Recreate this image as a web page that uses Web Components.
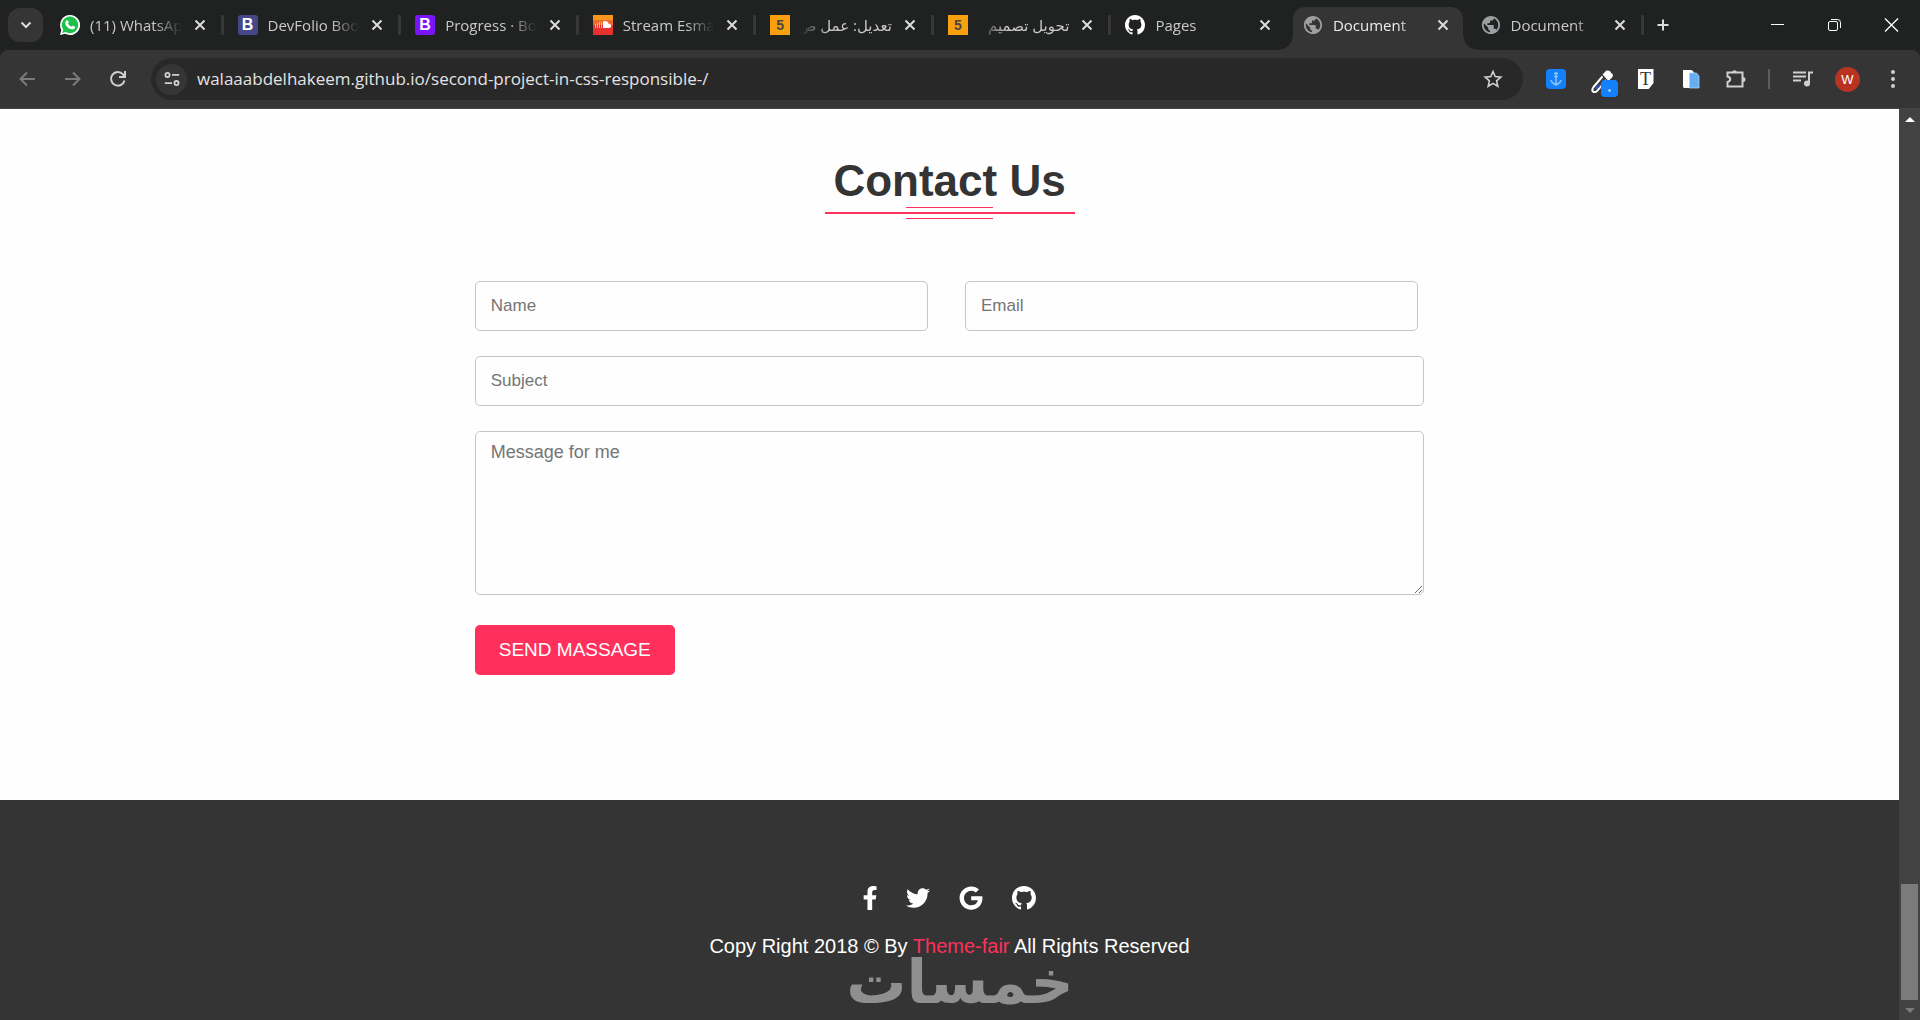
<!DOCTYPE html>
<html lang="en">
<head>
<meta charset="UTF-8">
<meta name="viewport" content="width=device-width, initial-scale=1.0">
<title>Document</title>
<style>
    :root {
        --main_color: #ff305b;
        --dark_color: #343434;
        --strip_color: #202221;
        --toolbar_color: #353535;
        --ui_font: "Open Sans", "Noto Sans", "DejaVu Sans", sans-serif;
        --page_font: "Liberation Sans", Arial, sans-serif;
    }
    body {
        margin: 0;
        min-height: 100vh;
        display: flex;
        flex-direction: column;
        font-family: var(--page_font);
    }
    .view {
        flex: 1;
        display: flex;
    }
    main {
        flex: 1;
        display: flex;
        flex-direction: column;
        background-color: #fefefe;
    }
    page-footer {
        flex: 1;
    }
</style>
</head>
<body>
    <tab-strip>
        <browser-tab icon="whatsapp">(11) WhatsAp</browser-tab>
        <browser-tab letter="B" tint="#46478a">DevFolio Boo</browser-tab>
        <browser-tab letter="B" tint="#7a14fb">Progress · Boo</browser-tab>
        <browser-tab icon="soundcloud">Stream Esmae</browser-tab>
        <browser-tab letter="5" tint="#f9a00f" ink="#4a4540" square rtl>تعديل: عمل ص</browser-tab>
        <browser-tab letter="5" tint="#f9a00f" ink="#4a4540" square rtl>تحويل تصميم</browser-tab>
        <browser-tab icon="github" nosep>Pages</browser-tab>
        <browser-tab icon="globe" active nosep>Document</browser-tab>
        <browser-tab icon="globe">Document</browser-tab>
    </tab-strip>
    <browser-toolbar url="walaaabdelhakeem.github.io/second-project-in-css-responsible-/"></browser-toolbar>
    <div class="view">
        <main>
            <contact-section>
                <section-title slot="title">Contact Us</section-title>
            </contact-section>
            <page-footer>Copy Right 2018 © By <a href="#">Theme-fair</a> All Rights Reserved</page-footer>
        </main>
        <scroll-rail></scroll-rail>
    </div>
    <water-mark>خمسات</water-mark>

<script>
const line = 'fill="none" stroke="currentColor" stroke-width="2"'

const icons = {
    whatsapp: `<svg viewBox="0 0 20 20"><path fill="#fff" d="M10 0a10 10 0 1 1-4.700 18.800L0 20l1.400-5A10 10 0 0 1 10 0z"/><path fill="#1fc04a" d="M10 1.600a8.300 8.300 0 1 1-4.200 15.500L2.300 17.900l.9-3.400A8.300 8.300 0 0 1 10 1.600z"/><path fill="#fff" d="M7 5.300c.5-.3.900-.1 1.100.4l.7 1.600c.1.400-.7 1-.8 1.300.8 1.500 1.900 2.500 3.400 3.100.4 0 1-1.200 1.400-1l1.900.9c.5.300.3 1.100 0 1.600-.8 1.300-2.500 1.400-4.100.8-2.600-1-4.300-2.800-5.300-5.100-.5-1.500.6-3.100 1.700-3.600z"/></svg>`,
    soundcloud: `<svg viewBox="0 0 20 20"><path fill="#f7941d" d="M0 0h20v10H0z"/><path fill="#e8302e" d="M0 10h20v10H0z"/><path fill="#f06a2a" d="M0 5h20v5H0z"/><path fill="#f5b3a0" d="M2 9h1v4H2zM4 8h1v5H4zM6 7h1v6H6zM8 7h1v6H8z"/><path fill="#fff" d="M10 6.500c3-1.600 5.500.2 5.800 2.500 1.300-.2 2.400.8 2.400 2s-1 2-2.200 2h-6z"/></svg>`,
    github: `<svg viewBox="0 0 16 16"><path fill="#fff" d="M8 0C3.580 0 0 3.580 0 8c0 3.540 2.290 6.530 5.470 7.590.4.070.55-.17.55-.38 0-.19-.01-.82-.01-1.490-2.010.37-2.530-.49-2.690-.94-.09-.23-.48-.94-.82-1.130-.28-.15-.68-.52-.01-.53.63-.01 1.080.58 1.230.82.72 1.210 1.870.87 2.330.66.07-.52.28-.87.51-1.070-1.780-.2-3.640-.89-3.640-3.950 0-.87.31-1.590.82-2.150-.08-.2-.36-1.020.08-2.120 0 0 .67-.21 2.200.82.64-.18 1.320-.27 2-.27s1.360.09 2 .27c1.530-1.040 2.200-.82 2.200-.82.44 1.100.16 1.920.08 2.120.51.56.82 1.270.82 2.150 0 3.070-1.870 3.750-3.650 3.950.29.25.54.73.54 1.480 0 1.070-.01 1.930-.01 2.200 0 .21.15.46.55.38A8.010 8.010 0 0 0 16 8c0-4.420-3.580-8-8-8z"/></svg>`,
    globe: `<svg viewBox="1 1 22 22"><path fill="#9da0a3" d="M12 2C6.480 2 2 6.480 2 12s4.480 10 10 10 10-4.480 10-10S17.520 2 12 2zm-1 17.930c-3.950-.49-7-3.850-7-7.930 0-.62.08-1.210.21-1.790L9 15v1c0 1.100.9 2 2 2v1.930zm6.900-2.540c-.26-.81-1-1.390-1.900-1.390h-1v-3c0-.55-.45-1-1-1H8v-2h2c.55 0 1-.45 1-1V7h2c1.100 0 2-.9 2-2v-.41c2.930 1.190 5 4.060 5 7.410 0 2.080-.8 3.970-2.100 5.390z"/></svg>`,
    close: `<svg viewBox="0 0 20 20"><path ${line} d="M5.500 5.500l9 9M14.500 5.500l-9 9"/></svg>`,
    chevron: `<svg viewBox="0 0 20 20"><path ${line} d="M5.500 7.500l4.500 4.500 4.500-4.500"/></svg>`,
    plus: `<svg viewBox="0 0 20 20"><path ${line} d="M10 4.500v11M4.500 10h11"/></svg>`,
    minimize: `<svg viewBox="0 0 20 20"><path fill="none" stroke="currentColor" d="M3 9.500h13"/></svg>`,
    restore: `<svg viewBox="0 0 20 20"><g fill="none" stroke="currentColor"><rect x="3.500" y="6.500" width="9" height="9" rx="1.500"/><path d="M6 4.500h6.500q3 0 3 3V13"/></g></svg>`,
    quit: `<svg viewBox="0 0 20 20"><path fill="none" stroke="currentColor" stroke-width="1.300" d="M3 3.500l13 13M16 3.500l-13 13"/></svg>`,
    back: `<svg viewBox="0 0 20 20"><path ${line} d="M17 10H3M9 3.500L2.500 10 9 16.500"/></svg>`,
    forward: `<svg viewBox="0 0 20 20"><path ${line} d="M2 10h14M10 3.500l6.500 6.500-6.500 6.500"/></svg>`,
    reload: `<svg viewBox="0 0 20 20"><path ${line} d="M16.500 11.500A6.800 6.800 0 1 1 15 5.300l1.500 2"/><path ${line} d="M17 2v6h-6"/></svg>`,
    tune: `<svg viewBox="0 0 20 20"><g ${line}><circle cx="5" cy="5.500" r="2.300"/><circle cx="15" cy="14.500" r="2.300"/><path d="M10 5.500h8M2 14.500h8"/></g></svg>`,
    star: `<svg viewBox="0 0 20 20"><path fill="none" stroke="currentColor" stroke-width="1.600" d="M10 2.500l2.200 5.100 5.600.5-4.200 3.700 1.200 5.500L10 14.400l-4.800 2.900 1.200-5.500-4.200-3.700 5.600-.5z"/></svg>`,
    anchor: `<svg viewBox="0 0 20 20"><rect width="20" height="20" rx="4" fill="#1580fb"/><path fill="none" stroke="#8cc4f5" stroke-width="1.500" d="M10 3v13M8 4.500h4M8 7.500h4M5 11c.5 3 3 4 5 5 2-1 4.500-2 5-5"/></svg>`,
    dropper: `<svg viewBox="0 0 28 28"><path fill="#fff" d="M14 3c2-3 6-1 6 1 2 .5 3 3 .5 5l-3 3-6-6.500z"/><path fill="none" stroke="#fff" stroke-width="2" d="M11.500 7.500L2.500 18c-1.500 2-1.500 4-.5 4.500 1 1 3 .5 4-.5l9-11"/><path fill="#3450b0" d="M4 18.500l4-3 2 1-5 5z"/><rect x="10" y="11" width="17" height="17" rx="4" fill="#1580fb"/><path fill="#fff" d="M17.500 20.500h2v2h-2z"/></svg>`,
    paste: `<svg viewBox="0 0 20 20"><path fill="#fff" d="M2 1h7c3 0 4 2 4 4v14H4c-1.500 0-2-.5-2-2z"/><path fill="#67aef0" stroke="#a9d4fa" stroke-width=".8" d="M8.500 4h7l2.500 3v12H8.500z"/></svg>`,
    puzzle: `<svg viewBox="0 0 20 20"><path ${line} d="M1.500 3.500h15v14h-15v-4.500q2.700-.6 2.700-2.700t-2.700-2.700z"/><path fill="currentColor" d="M6 3a2.700 2.700 0 0 1 5 0zM17 8a2.500 2.500 0 0 1 0 5z"/></svg>`,
    queue: `<svg viewBox="0 0 20 20"><path ${line} d="M0 3.500h13M0 7.500h13M0 11.500h8M16 15V3.500h4"/><circle cx="14" cy="14.500" r="3" fill="currentColor"/></svg>`,
    dots: `<svg viewBox="0 0 20 20"><g fill="currentColor"><circle cx="10" cy="3" r="2"/><circle cx="10" cy="10" r="2"/><circle cx="10" cy="17" r="2"/></g></svg>`,
    facebook: `<svg viewBox="22 0 272 512"><path fill="#fff" d="M279.140 288l14.220-92.660h-88.910v-60.130c0-25.350 12.420-50.060 52.240-50.060h40.420V6.260S260.430 0 225.360 0c-73.220 0-121.080 44.380-121.080 124.720v70.620H22.890V288h81.390v224h100.170V288z"/></svg>`,
    twitter: `<svg viewBox="0 0 512 512"><path fill="#fff" d="M459.370 151.716c.325 4.548.325 9.097.325 13.645 0 138.720-105.583 298.558-298.558 298.558-59.452 0-114.680-17.219-161.137-47.106 8.447.974 16.568 1.299 25.340 1.299 49.055 0 94.213-16.568 130.274-44.832-46.132-.975-84.792-31.188-98.112-72.772 6.498.974 12.995 1.624 19.818 1.624 9.421 0 18.843-1.300 27.614-3.573-48.081-9.747-84.143-51.980-84.143-102.985v-1.299c13.969 7.797 30.214 12.670 47.431 13.319-28.264-18.843-46.781-51.005-46.781-87.391 0-19.492 5.197-37.360 14.294-52.954 51.655 63.675 129.300 105.258 216.365 109.807-1.624-7.797-2.599-15.918-2.599-24.040 0-57.828 46.782-104.934 104.934-104.934 30.213 0 57.502 12.670 76.670 33.137 23.715-4.548 46.456-13.320 66.599-25.340-7.798 24.366-24.366 44.833-46.132 57.827 21.117-2.273 41.584-8.122 60.426-16.243-14.292 20.791-32.161 39.308-52.628 54.253z"/></svg>`,
    google: `<svg viewBox="0 0 488 512"><path fill="#fff" d="M488 261.800C488 403.300 391.100 504 248 504 110.800 504 0 393.200 0 256S110.800 8 248 8c66.800 0 123 24.500 166.300 64.900l-67.500 64.900C258.500 52.600 94.300 116.600 94.300 256c0 86.500 69.100 156.600 153.700 156.600 98.200 0 135-70.400 140.800-106.900H248v-85.300h236.100c2.300 12.700 3.900 24.900 3.900 41.400z"/></svg>`
}

customElements.define("tab-strip", class TabStrip extends HTMLElement{
    constructor(){
        super()
        this.shadow = this.attachShadow({mode: "open"})
        this.shadow.innerHTML = `
            <style>
            :host {
                display: flex;
                height: 50px;
                background-color: var(--strip_color);
                color: #dcdcdc;
                padding-left: 8px;
                font-family: var(--ui_font);
            }
            button {
                background: none;
                border: none;
                padding: 0;
                color: inherit;
                display: flex;
                align-items: center;
                justify-content: center;
            }
            svg {
                width: 20px;
                height: 20px;
            }
            .search {
                align-self: center;
                flex: none;
                width: 35px;
                height: 34px;
                border-radius: 12px;
                background-color: var(--toolbar_color);
                margin-right: 3px;
            }
            .tabs {
                flex: 0 1 1598px;
                min-width: 0;
                display: flex;
            }
            .new {
                width: 38px;
            }
            .window {
                margin-left: auto;
                display: flex;
                color: #fff;
                button {
                    width: 57px;
                }
            }
            </style>
            <button class="search" aria-label="Search tabs">${icons.chevron}</button>
            <div class="tabs"><slot></slot></div>
            <button class="new" aria-label="New tab">${icons.plus}</button>
            <div class="window">
                <button aria-label="Minimize">${icons.minimize}</button>
                <button aria-label="Restore">${icons.restore}</button>
                <button aria-label="Close">${icons.quit}</button>
            </div>
        `
    }
})

customElements.define("browser-tab", class BrowserTab extends HTMLElement{
    constructor(){
        super()
        this.shadow = this.attachShadow({mode: "open"})
        const letter = this.getAttribute("letter")
        const favicon = letter
            ? `<span class="letter" style="background-color:${this.getAttribute("tint")};color:${this.getAttribute("ink") || "#fff"}">${letter}</span>`
            : icons[this.getAttribute("icon")]
        this.shadow.innerHTML = `
            <style>
            :host {
                flex: 1 1 0;
                min-width: 0;
                display: flex;
                align-items: center;
                position: relative;
                box-sizing: border-box;
                padding-left: 14px;
                font-size: 15px;
                color: #c8c8c8;
            }
            :host([active]) {
                color: #ececec;
                isolation: isolate;
            }
            /* tab shape with the two flared feet */
            :host([active])::before {
                content: "";
                position: absolute;
                z-index: -1;
                inset: 7px -10px 0 -10px;
                background:
                    radial-gradient(circle at 0 0, transparent 13px, var(--toolbar_color) 14px) left bottom / 14px 14px no-repeat,
                    radial-gradient(circle at 100% 0, transparent 13px, var(--toolbar_color) 14px) right bottom / 14px 14px no-repeat;
            }
            :host([active])::after {
                content: "";
                position: absolute;
                z-index: -1;
                inset: 7px 4px 0 4px;
                border-radius: 12px 12px 0 0;
                background-color: var(--toolbar_color);
            }
            svg, .letter {
                flex: none;
                width: 20px;
                height: 20px;
            }
            .letter {
                border-radius: 3px;
                font: bold 16px/20px var(--page_font);
                text-align: center;
            }
            :host([square]) .letter {
                border-radius: 0;
                font-size: 14px;
            }
            .title {
                flex: 1;
                min-width: 0;
                margin: 0 8px 0 10px;
                line-height: 24px;
                white-space: nowrap;
                overflow: hidden;
                mask-image: linear-gradient(to left, transparent, #000 28px);
            }
            :host([rtl]) .title {
                direction: rtl;
                mask-image: linear-gradient(to right, transparent, #000 28px);
            }
            button {
                flex: none;
                display: flex;
                background: none;
                border: none;
                padding: 0;
                color: #dcdcdc;
            }
            .sep {
                flex: none;
                width: 3px;
                height: 20px;
                margin-left: 11px;
                border-radius: 1px;
                background-color: #383838;
            }
            :host([nosep]) .sep {
                visibility: hidden;
            }
            </style>
            ${favicon}
            <span class="title"><slot></slot></span>
            <button aria-label="Close tab">${icons.close}</button>
            <span class="sep"></span>
        `
    }
})

customElements.define("browser-toolbar", class BrowserToolbar extends HTMLElement{
    constructor(){
        super()
        this.shadow = this.attachShadow({mode: "open"})
        this.shadow.innerHTML = `
            <style>
            :host {
                display: block;
                background-color: var(--strip_color);
                color: #d0d0d0;
                font-family: var(--ui_font);
            }
            .toolbar {
                display: flex;
                align-items: center;
                height: 58px;
                padding: 0 5px;
                background-color: var(--toolbar_color);
                border-bottom: 1px solid #444;
                border-radius: 8px 8px 0 0;
            }
            button {
                flex: none;
                width: 45px;
                height: 42px;
                display: flex;
                align-items: center;
                justify-content: center;
                background: none;
                border: none;
                padding: 0;
                color: inherit;
            }
            svg {
                width: 20px;
                height: 20px;
            }
            .off {
                color: #7b7b7b;
            }
            .bar {
                flex: 1;
                display: flex;
                align-items: center;
                height: 42px;
                margin: 0 10px 0 11px;
                padding-left: 5px;
                border-radius: 21px;
                background-color: #282828;
                .tune {
                    width: 31px;
                    height: 31px;
                    border-radius: 50%;
                    background-color: var(--toolbar_color);
                    svg {
                        width: 18px;
                        height: 18px;
                    }
                }
                input {
                    flex: 1;
                    min-width: 0;
                    margin-left: 10px;
                    padding: 0;
                    border: none;
                    outline: none;
                    background: none;
                    color: #e3e3e3;
                    font: 17px/24px var(--ui_font);
                }
                .star {
                    width: 60px;
                }
            }
            .sep {
                width: 2px;
                height: 20px;
                margin: 0 10px;
                background-color: #5c5c5c;
            }
            .wide svg {
                width: 28px;
                height: 28px;
                margin: 8px 0 0 8px;
            }
            .type {
                width: 16px;
                height: 20px;
                background-color: #fff;
                color: #333;
                font: 18px/20px "Liberation Serif", serif;
                clip-path: polygon(0 0, 100% 0, 100% 70%, 70% 100%, 0 100%);
            }
            .avatar {
                width: 25px;
                height: 25px;
                border-radius: 50%;
                background-color: #b93420;
                color: #fff;
                font-size: 13px;
                line-height: 25px;
            }
            </style>
            <div class="toolbar">
                <button class="off" aria-label="Back">${icons.back}</button>
                <button class="off" aria-label="Forward">${icons.forward}</button>
                <button aria-label="Reload">${icons.reload}</button>
                <div class="bar">
                    <button class="tune" aria-label="View site information">${icons.tune}</button>
                    <input type="text" aria-label="Address" value="${this.getAttribute("url")}">
                    <button class="star" aria-label="Bookmark this tab">${icons.star}</button>
                </div>
                <button aria-label="Downloader">${icons.anchor}</button>
                <button class="wide" aria-label="Color picker">${icons.dropper}</button>
                <button aria-label="Fonts"><span class="type">T</span></button>
                <button aria-label="Copy">${icons.paste}</button>
                <button aria-label="Extensions">${icons.puzzle}</button>
                <span class="sep"></span>
                <button aria-label="Media">${icons.queue}</button>
                <button aria-label="Profile"><span class="avatar">W</span></button>
                <button aria-label="Menu">${icons.dots}</button>
            </div>
        `
    }
})

customElements.define("section-title", class SectionTitle extends HTMLElement{
    constructor(){
        super()
        this.shadow = this.attachShadow({mode: "open"})
        this.shadow.innerHTML = `
            <style>
            :host {
                display: flex;
                flex-direction: column;
                align-items: center;
            }
            h2 {
                margin: 0;
                padding-top: 1px;
                font-size: 44px;
                line-height: 52px;
                color: var(--dark_color);
            }
            .short {
                width: 87px;
                height: 1px;
                background-color: var(--main_color);
            }
            .long {
                width: 250px;
                height: 2px;
                margin: 4px 0;
                background-color: var(--main_color);
            }
            </style>
            <h2><slot></slot></h2>
            <span class="short"></span>
            <span class="long"></span>
            <span class="short"></span>
        `
    }
})

customElements.define("contact-section", class ContactSection extends HTMLElement{
    constructor(){
        super()
        this.shadow = this.attachShadow({mode: "open"})
        this.shadow.innerHTML = `
            <style>
            :host {
                display: block;
                padding: 45px 0 125px;
            }
            form {
                width: 50%;
                margin: 62px auto 0;
                display: flex;
                flex-direction: column;
                gap: 25px;
            }
            .row {
                display: grid;
                grid-template-columns: 1fr 1fr;
                gap: 37px;
                padding-right: 6px;
            }
            input, textarea {
                box-sizing: border-box;
                width: 100%;
                min-width: 0;
                margin: 0;
                height: 50px;
                padding: 0 15px;
                border: 1px solid #c6c6c6;
                border-radius: 5px;
                background-color: transparent;
                font: 17px/20px var(--page_font);
            }
            textarea {
                height: 164px;
                padding-top: 10px;
                font-size: 18px;
            }
            ::placeholder {
                color: #757575;
            }
            button {
                align-self: flex-start;
                height: 50px;
                margin-top: 5px;
                padding: 0 24px;
                border: none;
                border-radius: 5px;
                background-color: var(--main_color);
                color: #fff;
                font: 19px/24px var(--page_font);
                text-transform: uppercase;
            }
            </style>
            <slot name="title"></slot>
            <form>
                <div class="row">
                    <input type="text" placeholder="Name" aria-label="Name">
                    <input type="email" placeholder="Email" aria-label="Email">
                </div>
                <input type="text" placeholder="Subject" aria-label="Subject">
                <textarea placeholder="Message for me" aria-label="Message for me"></textarea>
                <button type="button">SEND MASSAGE</button>
            </form>
        `
    }
})

customElements.define("page-footer", class PageFooter extends HTMLElement{
    constructor(){
        super()
        this.shadow = this.attachShadow({mode: "open"})
        this.shadow.innerHTML = `
            <style>
            :host {
                display: flex;
                flex-direction: column;
                align-items: center;
                gap: 24px;
                padding-top: 86px;
                background-color: var(--dark_color);
                color: #fff;
            }
            nav {
                display: flex;
                gap: 29px;
                a {
                    display: flex;
                }
                svg {
                    height: 24px;
                    width: 24px;
                }
                .slim svg {
                    width: 14px;
                }
            }
            p {
                margin: 0;
                font-size: 20px;
                line-height: 24px;
            }
            ::slotted(a) {
                color: var(--main_color);
                text-decoration: none;
            }
            </style>
            <nav>
                <a href="#" class="slim" aria-label="Facebook">${icons.facebook}</a>
                <a href="#" aria-label="Twitter">${icons.twitter}</a>
                <a href="#" aria-label="Google">${icons.google}</a>
                <a href="#" aria-label="Github">${icons.github}</a>
            </nav>
            <p><slot></slot></p>
        `
    }
})

customElements.define("scroll-rail", class ScrollRail extends HTMLElement{
    constructor(){
        super()
        this.shadow = this.attachShadow({mode: "open"})
        this.shadow.innerHTML = `
            <style>
            :host {
                width: 21px;
                display: flex;
                flex-direction: column;
                align-items: center;
                justify-content: space-between;
                background-color: #424242;
            }
            svg {
                width: 10px;
                height: 5px;
                padding: 8px 0 7px;
            }
            .end {
                display: flex;
                flex-direction: column;
                align-items: center;
            }
            .thumb {
                width: 17px;
                height: 116px;
                background-color: #7b7b7b;
            }
            </style>
            <svg viewBox="0 0 10 5"><path fill="#fff" d="M0 5l5-5 5 5z"/></svg>
            <div class="end">
                <span class="thumb"></span>
                <svg viewBox="0 0 10 5"><path fill="#7b7b7b" d="M0 0l5 5 5-5z"/></svg>
            </div>
        `
    }
})

/* brand mark lying over the bottom of the page */
customElements.define("water-mark", class WaterMark extends HTMLElement{
    constructor(){
        super()
        this.shadow = this.attachShadow({mode: "open"})
        this.shadow.innerHTML = `
            <style>
            :host {
                position: fixed;
                left: 0;
                right: 0;
                bottom: 16px;
                text-align: center;
                direction: rtl;
                pointer-events: none;
                color: #8f8f8f;
                font: bold 60px/44px "DejaVu Sans", sans-serif;
            }
            </style>
            <slot></slot>
        `
    }
})
</script>
</body>
</html>
